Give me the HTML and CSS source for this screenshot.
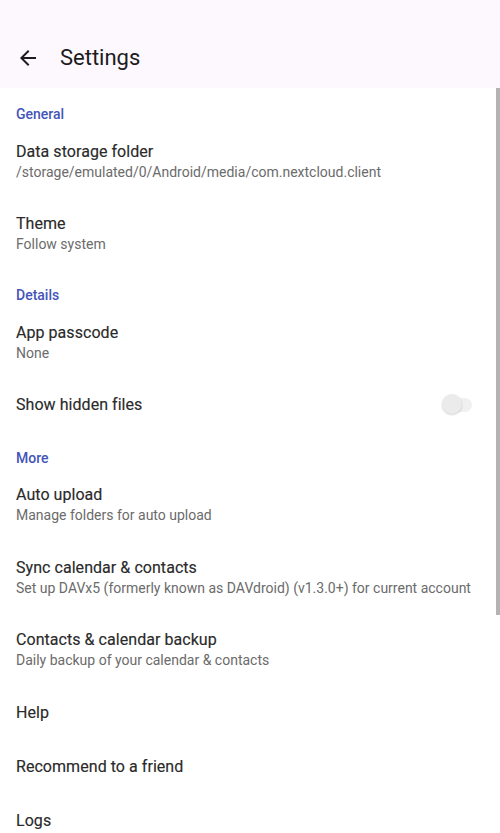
FILE: index.html
```html
<!DOCTYPE html>
<html>
<head>
<meta charset="utf-8">
<link rel="stylesheet" href="styles.css">
</head>
<body>
<div class="app">
  <header class="topbar">
    <svg class="back" viewBox="0 0 24 24" width="24" height="24"><path d="M20 11H7.83l5.59-5.59L12 4l-8 8 8 8 1.41-1.41L7.83 13H20v-2z" fill="#1d1b20"/></svg>
    <h1 class="title">Settings</h1>
  </header>
  <main class="list">
    <div class="cat">General</div>
    <div class="item two"><div class="t">Data storage folder</div><div class="s">/storage/emulated/0/Android/media/com.nextcloud.client</div></div>
    <div class="item two"><div class="t">Theme</div><div class="s">Follow system</div></div>
    <div class="cat">Details</div>
    <div class="item two"><div class="t">App passcode</div><div class="s">None</div></div>
    <div class="item one row"><div class="t">Show hidden files</div><div class="switch"><span class="track"></span><span class="thumb"></span></div></div>
    <div class="cat">More</div>
    <div class="item two"><div class="t">Auto upload</div><div class="s">Manage folders for auto upload</div></div>
    <div class="item two"><div class="t">Sync calendar &amp; contacts</div><div class="s">Set up DAVx5 (formerly known as DAVdroid) (v1.3.0+) for current account</div></div>
    <div class="item two"><div class="t">Contacts &amp; calendar backup</div><div class="s">Daily backup of your calendar &amp; contacts</div></div>
    <div class="item one"><div class="t">Help</div></div>
    <div class="item one"><div class="t">Recommend to a friend</div></div>
    <div class="item one"><div class="t">Logs</div></div>
  </main>
  <div class="scrollbar"></div>
</div>
</body>
</html>
```
FILE: styles.css
```css
* { box-sizing: border-box; }
html, body { margin: 0; padding: 0; }
body {
  width: 500px;
  height: 833px;
  overflow: hidden;
  background: #ffffff;
  font-family: Roboto, "Noto Sans", sans-serif;
}
.app { position: relative; width: 500px; height: 833px; overflow: hidden; }
.topbar {
  height: 88px;
  background: #fcf8fd;
  display: flex;
  align-items: flex-end;
  padding: 0 0 18px 16px;
}
.back { flex: none; display: block; }
.title {
  margin: 0 0 0 20px;
  font-size: 22px;
  font-weight: 400;
  line-height: 24px;
  color: #1d1b20;
}
.list { display: flex; flex-direction: column; }
.cat {
  padding: 16px 16px 0;
  height: 36px;
  line-height: 20px;
  font-size: 14px;
  font-weight: 500;
  color: #4355b9;
}
.item { padding: 16.5px 16px 15.5px 16px; }
.item .t {
  font-size: 16px;
  line-height: 22px;
  color: #2a2a2a;
  font-weight: 400;
  letter-spacing: 0.05px;
  -webkit-text-stroke: 0.15px #2a2a2a;
}
.item .s {
  font-size: 14px;
  line-height: 18.5px;
  color: #6b6b6b;
}
.row { display: flex; align-items: center; justify-content: space-between; padding-right: 28px; }
.switch { position: relative; width: 30px; height: 22px; }
.track {
  position: absolute; left: 1px; top: 4px; width: 29px; height: 14px;
  border-radius: 7px; background: #f0f0f0;
}
.thumb {
  position: absolute; left: 0; top: 0; width: 20px; height: 20px;
  border-radius: 50%; background: #ebebeb;
  box-shadow: 0 1px 2px rgba(0,0,0,0.18);
}
.scrollbar {
  position: absolute; left: 496px; top: 88px; width: 4px; height: 527px;
  background: #b3b3b3;
}
```
